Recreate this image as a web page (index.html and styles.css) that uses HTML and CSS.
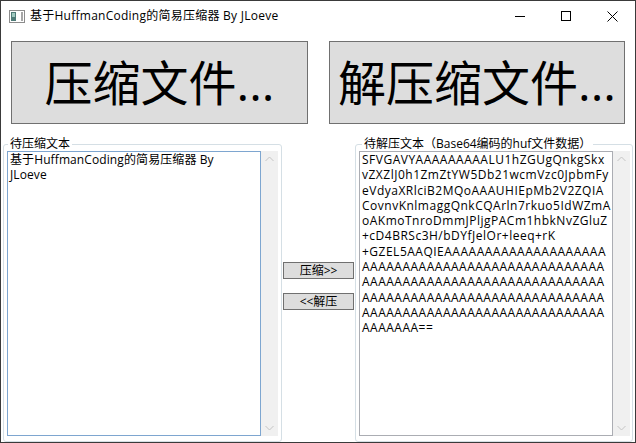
FILE: index.html
```html
<!DOCTYPE html>
<html lang="zh-CN">
<head>
<meta charset="utf-8">
<title>基于HuffmanCoding的简易压缩器 By JLoeve</title>
<link rel="stylesheet" href="styles.css">
</head>
<body>
<div class="window">
  <div class="titlebar">
    <svg class="app-icon" viewBox="0 0 16 13" width="16" height="13">
      <rect x="0.5" y="0.5" width="15" height="12" fill="#ffffff" stroke="#8c8c8c"/>
      <rect x="2" y="2" width="5" height="9" fill="#4f7b78"/>
      <rect x="3" y="3" width="3" height="4" fill="#9fc9bf"/>
      <rect x="12" y="2" width="2" height="9" fill="#a6a6a6"/>
    </svg>
    <span class="title">基于HuffmanCoding的简易压缩器 By JLoeve</span>
    <div class="caps">
      <span class="cap"><svg width="10" height="10" viewBox="0 0 10 10"><path d="M0 5.5H10" stroke="#000" stroke-width="1"/></svg></span>
      <span class="cap"><svg width="10" height="10" viewBox="0 0 10 10"><rect x="0.5" y="0.5" width="9" height="9" fill="none" stroke="#000" stroke-width="1"/></svg></span>
      <span class="cap"><svg width="11" height="11" viewBox="0 0 11 11"><path d="M0.5 0.5L10.5 10.5M10.5 0.5L0.5 10.5" stroke="#000" stroke-width="1"/></svg></span>
    </div>
  </div>
  <div class="client">
    <div class="top-row">
      <button class="big-btn">压缩文件...</button>
      <button class="big-btn">解压缩文件...</button>
    </div>
    <div class="bottom-row">
      <fieldset class="group group-left">
        <legend>待压缩文本</legend>
        <div class="group-body">
          <div class="textbox focused">基于HuffmanCoding的简易压缩器 By<br>JLoeve</div>
          <div class="scrollbar">
            <svg width="9" height="6" viewBox="0 0 9 6"><path d="M0.5 5L4.5 1L8.5 5" fill="none" stroke="#c4c4c4"/></svg>
            <svg width="9" height="6" viewBox="0 0 9 6"><path d="M0.5 1L4.5 5L8.5 1" fill="none" stroke="#c4c4c4"/></svg>
          </div>
        </div>
      </fieldset>
      <div class="middle">
        <button class="small-btn">压缩&gt;&gt;</button>
        <button class="small-btn">&lt;&lt;解压</button>
      </div>
      <fieldset class="group group-right">
        <legend>待解压文本（Base64编码的huf文件数据）</legend>
        <div class="group-body">
          <div class="textbox data">SFVGAVYAAAAAAAAALU1hZGUgQnkgSkx<br>vZXZlJ0h1ZmZtYW5Db21wcmVzc0JpbmFy<br>eVdyaXRlciB2MQoAAAUHIEpMb2V2ZQIA<br>CovnvKnlmaggQnkCQArln7rkuo5IdWZmA<br>oAKmoTnroDmmJPljgPACm1hbkNvZGluZ<br>+cD4BRSc3H/bDYfJelOr+leeq+rK<br>+GZEL5AAQIEAAAAAAAAAAAAAAAAAAAA<br>AAAAAAAAAAAAAAAAAAAAAAAAAAAAAA<br>AAAAAAAAAAAAAAAAAAAAAAAAAAAAAA<br>AAAAAAAAAAAAAAAAAAAAAAAAAAAAAA<br>AAAAAAAAAAAAAAAAAAAAAAAAAAAAAA<br>AAAAAAA==</div>
          <div class="scrollbar">
            <svg width="9" height="6" viewBox="0 0 9 6"><path d="M0.5 5L4.5 1L8.5 5" fill="none" stroke="#c4c4c4"/></svg>
            <svg width="9" height="6" viewBox="0 0 9 6"><path d="M0.5 1L4.5 5L8.5 1" fill="none" stroke="#c4c4c4"/></svg>
          </div>
        </div>
      </fieldset>
    </div>
  </div>
</div>
</body>
</html>
```
FILE: styles.css
```css
* { box-sizing: border-box; }
html, body { margin: 0; padding: 0; background: #ffffff; }
body {
  font-family: "Open Sans", "Noto Sans CJK SC", sans-serif;
  font-size: 12px;
  color: #000;
}
.window {
  width: 636px;
  height: 443px;
  border: 1px solid #3a3a3a;
  display: flex;
  flex-direction: column;
  background: #fff;
}
.titlebar {
  height: 30px;
  flex: none;
  display: flex;
  align-items: center;
  padding-left: 8px;
}
.app-icon { flex: none; margin-right: 5px; }
.title { flex: 1; line-height: 16px; white-space: nowrap; letter-spacing: 0.25px; }
.caps { display: flex; align-self: stretch; }
.cap {
  width: 46px;
  display: flex;
  align-items: center;
  justify-content: center;
}
.client {
  flex: 1;
  display: flex;
  flex-direction: column;
  padding-top: 10px;
  min-height: 0;
}
.top-row {
  flex: none;
  height: 83px;
  display: grid;
  grid-template-columns: 297px 296px;
  column-gap: 21px;
  padding: 0 10px;
}
.big-btn {
  margin: 0;
  padding: 0;
  background: #dddddd;
  border: 1px solid #707070;
  font-family: "Open Sans", "Noto Sans CJK SC", sans-serif;
  font-size: 48px;
  line-height: 1;
  color: #000;
  white-space: nowrap;
  overflow: hidden;
  display: flex;
  align-items: center;
  justify-content: center;
}
.bottom-row {
  flex: 1;
  min-height: 0;
  margin-top: 13px;
  display: grid;
  grid-template-columns: 279px 73px 278px;
  padding: 0 2px;
}
.group {
  margin: 0;
  min-width: 0;
  padding: 0 3px 5px 3px;
  border: 1px solid #d5dfe5;
  border-radius: 3px;
  display: flex;
  flex-direction: column;
}
.group-right { padding-right: 2px; }
.group legend {
  padding: 0 2px;
  margin-left: 1px;
  line-height: 14px;
  font-size: 12px;
  white-space: nowrap;
}
.group-right legend { margin-left: 3px; }
.group-body {
  flex: 1;
  min-height: 0;
  display: flex;
}
.textbox {
  width: 254px;
  flex: none;
  border: 1px solid #abadb3;
  padding: 0 2px;
  line-height: 15.3px;
  white-space: nowrap;
  overflow: hidden;
  background: #fff;
  letter-spacing: 0.1px;
}
.textbox.data { letter-spacing: 0.5px; }
.textbox.focused { border-color: #7ea6d0; }
.scrollbar {
  width: 17px;
  flex: none;
  background: #f0f0f0;
  display: flex;
  flex-direction: column;
  justify-content: space-between;
  align-items: center;
  padding: 5px 0 5px;
}
.middle {
  display: flex;
  flex-direction: column;
  align-items: center;
  padding-top: 125px;
  gap: 14px;
}
.small-btn {
  width: 71px;
  height: 17px;
  margin: 0;
  padding: 0;
  background: #dddddd;
  border: 1px solid #707070;
  font-family: "Open Sans", "Noto Sans CJK SC", sans-serif;
  font-size: 12px;
  line-height: 15px;
  color: #000;
}
```
